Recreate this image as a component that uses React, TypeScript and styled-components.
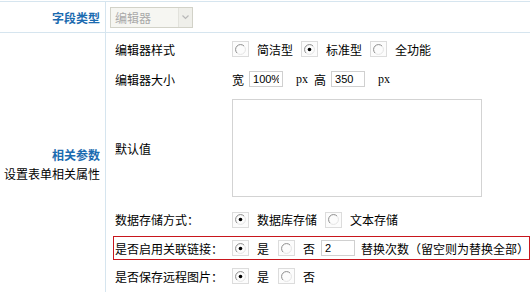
import React from 'react';
import styled, { createGlobalStyle } from 'styled-components';

const GlobalStyle = createGlobalStyle`
  html, body {
    margin: 0;
    padding: 0;
    background: #fff;
  }
  body {
    font: 12px "Noto Sans CJK SC", "Liberation Sans", sans-serif;
    color: #000;
  }
`;

const LINE = '#d6e5ef';

const Radio: React.FC<{ checked?: boolean }> = ({ checked }) => (
  <RadioBox>
    <svg width="11" height="11" viewBox="0 0 11 11">
      <path d="M2 9 A4.95 4.95 0 0 1 9 2" stroke="#8c8c8c" strokeWidth="1" fill="none" />
      <path d="M9 2 A4.95 4.95 0 0 1 2 9" stroke="#e4e4e4" strokeWidth="1" fill="none" />
      {checked && <circle cx="5.5" cy="5.5" r="1.8" fill="#000" />}
    </svg>
  </RadioBox>
);

const App: React.FC = () => {
  return (
    <>
      <GlobalStyle />
      <Table>
        <Row $h={30}>
          <LabelCell $top={0}>
            <Title>字段类型</Title>
          </LabelCell>
          <ContentCell $pad={4}>
            <FakeSelect>
              <SelectText>编辑器</SelectText>
              <SelectArrow>
                <svg width="7" height="5" viewBox="0 0 7 5">
                  <path d="M0.5 0.5 L3.5 3.5 L6.5 0.5" stroke="#b8b8b8" strokeWidth="1.2" fill="none" />
                </svg>
              </SelectArrow>
            </FakeSelect>
          </ContentCell>
        </Row>
        <Row $h={259}>
          <LabelCell $top={112}>
            <Title>相关参数</Title>
            <SubTitle>设置表单相关属性</SubTitle>
          </LabelCell>
          <ContentCell $pad={7} $column>
            <Field $h={32}>
              <FieldLabel>编辑器样式</FieldLabel>
              <Controls>
                <Radio />
                <Text $mr={8}>简洁型</Text>
                <Radio checked />
                <Text $mr={8}>标准型</Text>
                <Radio />
                <Text>全功能</Text>
              </Controls>
            </Field>
            <Field $h={28}>
              <FieldLabel>编辑器大小</FieldLabel>
              <Controls>
                <Text $mr={5}>宽</Text>
                <SmallInput readOnly value="100%" />
                <Unit>px</Unit>
                <Text $mr={5}>高</Text>
                <SmallInput readOnly value="350" />
                <Unit>px</Unit>
              </Controls>
            </Field>
            <Field $h={110}>
              <FieldLabel>默认值</FieldLabel>
              <Controls>
                <Area readOnly value="" />
              </Controls>
            </Field>
            <Field $h={33}>
              <FieldLabel>数据存储方式：</FieldLabel>
              <Controls>
                <Radio checked />
                <Text $mr={8}>数据库存储</Text>
                <Radio />
                <Text>文本存储</Text>
              </Controls>
            </Field>
            <Field $h={24} $highlight>
              <FieldLabel>是否启用关联链接：</FieldLabel>
              <Controls>
                <Radio checked />
                <Text $mr={9}>是</Text>
                <Radio />
                <Text $mr={6}>否</Text>
                <SmallInput readOnly value="2" />
                <Text>替换次数（留空则为替换全部）</Text>
              </Controls>
            </Field>
            <Field $h={32}>
              <FieldLabel>是否保存远程图片：</FieldLabel>
              <Controls>
                <Radio checked />
                <Text $mr={9}>是</Text>
                <Radio />
                <Text>否</Text>
              </Controls>
            </Field>
          </ContentCell>
        </Row>
      </Table>
    </>
  );
};

const Table = styled.div`
  margin-top: 1px;
  width: 530px;
  border-top: 1px solid ${LINE};
  overflow: hidden;
`;

const Row = styled.div<{ $h: number }>`
  display: grid;
  grid-template-columns: 106px 1fr;
  height: ${p => p.$h}px;
  border-bottom: 1px solid ${LINE};
`;

const LabelCell = styled.div<{ $top: number }>`
  box-sizing: border-box;
  border-right: 1px solid ${LINE};
  padding: ${p => p.$top}px 5px 0 0;
  display: flex;
  flex-direction: column;
  align-items: flex-end;
  justify-content: ${p => (p.$top ? 'flex-start' : 'center')};
  line-height: 19px;
`;

const Title = styled.span`
  color: #1b6bb0;
  font-weight: bold;
`;

const SubTitle = styled.span`
  color: #000;
`;

const ContentCell = styled.div<{ $pad: number; $column?: boolean }>`
  display: flex;
  flex-direction: ${p => (p.$column ? 'column' : 'row')};
  align-items: ${p => (p.$column ? 'stretch' : 'center')};
  padding-left: ${p => p.$pad}px;
  min-width: 0;
`;

const FakeSelect = styled.div`
  box-sizing: border-box;
  width: 83px;
  height: 21px;
  display: flex;
  border: 1px solid #d2d2c8;
  background: #f6f6f2;
`;

const SelectText = styled.span`
  flex: 1;
  padding-left: 4px;
  line-height: 19px;
  color: #a9a9a9;
`;

const SelectArrow = styled.span`
  width: 13px;
  display: flex;
  align-items: center;
  justify-content: center;
  background: #efefea;
  border-left: 1px solid #e2e2dc;
`;

const Field = styled.div<{ $h: number; $highlight?: boolean }>`
  box-sizing: border-box;
  height: ${p => p.$h}px;
  display: grid;
  grid-template-columns: 117px 1fr;
  align-items: center;
  padding-left: 1px;
  border: 1px solid ${p => (p.$highlight ? '#c8161d' : 'transparent')};
  border-left-width: 1px;
  white-space: nowrap;
`;

const FieldLabel = styled.span`
  color: #000;
`;

const Controls = styled.div`
  display: flex;
  align-items: center;
  min-width: 0;
  overflow: hidden;
`;

const RadioBox = styled.span`
  box-sizing: border-box;
  flex: none;
  width: 17px;
  height: 16px;
  margin-right: 8px;
  display: inline-flex;
  align-items: center;
  justify-content: center;
  border: 1px solid #dcdcdc;
  background: #fcfcfc;
`;

const Text = styled.span<{ $mr?: number }>`
  flex: none;
  margin-right: ${p => p.$mr ?? 0}px;
`;

const Unit = styled.span`
  flex: none;
  margin: 0 6px 0 7px;
  font: 12px "Liberation Serif", serif;
`;

const SmallInput = styled.input`
  box-sizing: border-box;
  flex: none;
  width: 34px;
  height: 16px;
  margin: 0 6px 0 0;
  padding: 0 3px;
  border: 1px solid #d0d0d0;
  background: #fff;
  font: 11px "Liberation Sans", Arial, sans-serif;
  color: #000;
  outline: none;
`;

const Area = styled.textarea`
  box-sizing: border-box;
  width: 250px;
  height: 98px;
  margin: 0;
  padding: 2px;
  border: 1px solid #d3d3d3;
  resize: none;
  outline: none;
  background: #fff;
`;

export default App;
